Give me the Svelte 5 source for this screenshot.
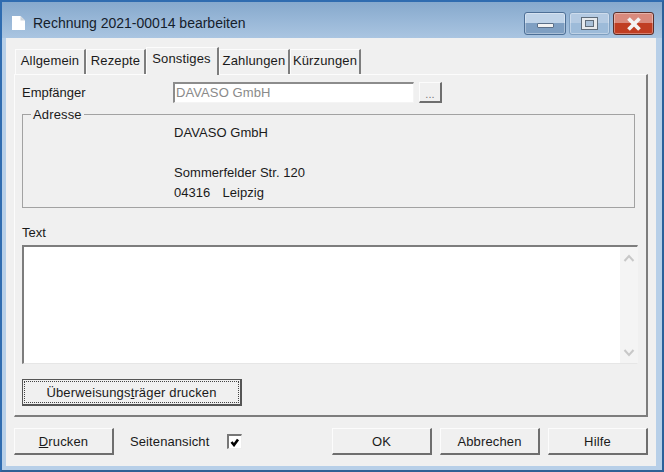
<script lang="ts">
  const tabs = [
    { label: 'Allgemein', width: 71 },
    { label: 'Rezepte', width: 60 },
    { label: 'Sonstiges', width: 73, active: true },
    { label: 'Zahlungen', width: 71 },
    { label: 'Kürzungen', width: 71 },
  ];
</script>

<div class="window">
  <header class="titlebar">
    <svg class="doc-icon" width="13" height="14" viewBox="0 0 13 14">
      <path d="M0 0h8.5l4.5 4.5v9.5h-13z" fill="#fff" />
      <path d="M8.5 0v4.5h4.5" fill="#cfd6dd" />
    </svg>
    <span class="title">Rechnung 2021-00014 bearbeiten</span>
    <div class="caption-buttons">
      <div class="cap cap-min"><span class="min-glyph"></span></div>
      <div class="cap cap-max"><span class="max-glyph"></span></div>
      <div class="cap cap-close">
        <svg width="18" height="14" viewBox="0 0 18 14">
          <path d="M3.5 1.5l11 11M14.5 1.5l-11 11" stroke="#f4f4f4" stroke-width="3.8" fill="none" />
        </svg>
      </div>
    </div>
  </header>

  <div class="client">
    <div class="tabs">
      {#each tabs as tab (tab.label)}
        <div class="tab" class:active={tab.active} style="width: {tab.width}px">{tab.label}</div>
      {/each}
    </div>

    <section class="pane">
      <div class="row-recipient">
        <span class="recipient-label">Empfänger</span>
        <div class="input">DAVASO GmbH</div>
        <div class="btn dots">...</div>
      </div>

      <div class="group">
        <span class="legend">Adresse</span>
        <div class="address">
          <div>DAVASO GmbH</div>
          <div>&nbsp;</div>
          <div>Sommerfelder Str. 120</div>
          <div class="city"><span>04316</span><span>Leipzig</span></div>
        </div>
      </div>

      <div class="text-label">Text</div>
      <div class="textarea">
        <div class="scrollbar">
          <svg width="12" height="8" viewBox="0 0 12 8"><path d="M1.5 7l4.5-5 4.5 5" stroke="#c8c8c8" stroke-width="2" fill="none" /></svg>
          <svg width="12" height="8" viewBox="0 0 12 8"><path d="M1.5 1l4.5 5 4.5-5" stroke="#c8c8c8" stroke-width="2" fill="none" /></svg>
        </div>
      </div>

      <div class="btn transfer"><span class="focus">Überweisungs<u>t</u>räger drucken</span></div>
    </section>

    <footer class="footer">
      <div class="btn action"><span><u>D</u>rucken</span></div>
      <span class="preview-label">Seitenansicht</span>
      <div class="checkbox">
        <svg width="10" height="9" viewBox="0 0 10 9"><path d="M1.5 4l2.5 3 4-5.5" stroke="#000" stroke-width="2.6" fill="none" /></svg>
      </div>
      <div class="actions">
        <div class="btn action">OK</div>
        <div class="btn action">Abbrechen</div>
        <div class="btn action">Hilfe</div>
      </div>
    </footer>
  </div>
</div>

<style>
  :global(body) {
    margin: 0;
  }

  .window {
    width: 664px;
    height: 472px;
    box-sizing: border-box;
    border: 2px solid #2f6cb0;
    border-right-color: #2b6099;
    border-bottom-color: #2f5f94;
    background: linear-gradient(to bottom, #86a9cd 0, #aac5e1 36px, #b7cfe8 36px);
    display: flex;
    flex-direction: column;
    font-family: "Liberation Sans", Arial, sans-serif;
    font-size: 13px;
    color: #1a1a1a;
    overflow: hidden;
  }

  .titlebar {
    height: 36px;
    flex: none;
    display: flex;
    align-items: flex-start;
    padding-left: 10px;
    box-sizing: border-box;
  }

  .doc-icon {
    margin-top: 14px;
    flex: none;
  }

  .title {
    margin-left: 8px;
    margin-top: 13px;
    font-size: 14px;
    line-height: 17px;
    color: #15202b;
  }

  .caption-buttons {
    margin-left: auto;
    margin-top: 10px;
    display: flex;
    gap: 3px;
    padding-right: 8px;
  }

  .cap {
    height: 23px;
    box-sizing: border-box;
    border: 1px solid #4d6f96;
    border-radius: 3px;
    display: flex;
    align-items: center;
    justify-content: center;
    box-shadow: inset 0 0 0 1px rgba(255, 255, 255, 0.35);
  }

  .cap-min {
    width: 42px;
    background: linear-gradient(to bottom, #bfd3e8 0 50%, #7f9fc2 50% 100%);
  }

  .cap-max {
    width: 41px;
    border-color: #7f9fc0;
    background: linear-gradient(to bottom, #b4cae2 0 50%, #9dbbd9 50% 100%);
  }

  .cap-close {
    width: 41px;
    border-color: #5a2f2a;
    background: linear-gradient(to bottom, #d98a7d 0 50%, #c03d22 50% 100%);
  }

  .min-glyph {
    width: 17px;
    height: 5px;
    margin-top: 3px;
    box-sizing: border-box;
    background: #f2f2f2;
    border: 1px solid #5b6f88;
    border-radius: 1px;
  }

  .max-glyph {
    width: 17px;
    height: 13px;
    box-sizing: border-box;
    background: #e6e9ec;
    border: 1px solid #5f6b78;
    padding: 2px 3px;
  }

  .max-glyph::after {
    content: "";
    display: block;
    width: 100%;
    height: 100%;
    box-sizing: border-box;
    border: 1px solid #5f6b78;
    background: #a9c0d8;
  }

  .client {
    flex: 1;
    margin: 0 6px 4px 4px;
    padding: 9px 8px 0;
    background: #f0f0f0;
    min-height: 0;
  }

  .tabs {
    display: flex;
    align-items: flex-end;
    height: 27px;
    padding-left: 1px;
    position: relative;
    z-index: 1;
  }

  .tab {
    height: 25px;
    box-sizing: border-box;
    border-top: 1px solid #fcfcfc;
    border-left: 1px solid #fcfcfc;
    border-right: 2px solid #7d7d7d;
    line-height: 22px;
    text-align: center;
    white-space: nowrap;
    letter-spacing: 0.15px;
  }

  .tab.active {
    height: 28px;
    margin-bottom: -1px;
    line-height: 22px;
    background: #f0f0f0;
    text-indent: -1px;
  }

  .pane {
    height: 343px;
    box-sizing: border-box;
    border-top: 1px solid #fcfcfc;
    border-left: 1px solid #fcfcfc;
    border-right: 2px solid #7d7d7d;
    border-bottom: 2px solid #7d7d7d;
    padding: 6px 0 0 7px;
  }

  .row-recipient {
    display: flex;
    align-items: center;
    height: 22px;
  }

  .recipient-label {
    width: 151px;
    padding-top: 1px;
  }

  .input {
    width: 241px;
    height: 21px;
    box-sizing: border-box;
    background: #fff;
    border: 1px solid #f4f4f4;
    border-top: 2px solid #8c8c8c;
    border-left: 2px solid #8c8c8c;
    padding-left: 1px;
    line-height: 18px;
    color: #8a8a8a;
    letter-spacing: 0.1px;
  }

  .btn {
    box-sizing: border-box;
    display: flex;
    align-items: center;
    justify-content: center;
    background: #f0f0f0;
    border-top: 1px solid #fcfcfc;
    border-left: 1px solid #fcfcfc;
    border-right: 2px solid #6e6e6e;
    border-bottom: 2px solid #6e6e6e;
    letter-spacing: 0.15px;
  }

  .dots {
    width: 23px;
    height: 21px;
    margin-left: 5px;
    color: #777;
    font-size: 11px;
    padding-top: 4px;
  }

  .group {
    position: relative;
    width: 613px;
    height: 94px;
    box-sizing: border-box;
    margin-top: 11px;
    border: 1px solid #a2a2a2;
    padding: 8px 0 0 151px;
  }

  .legend {
    position: absolute;
    top: -8px;
    left: 8px;
    padding: 0 2px;
    background: #f0f0f0;
    line-height: 15px;
    letter-spacing: 0.15px;
  }

  .address {
    line-height: 20px;
    letter-spacing: 0.05px;
  }

  .city {
    display: flex;
    gap: 12px;
  }

  .text-label {
    margin-top: 17px;
    line-height: 16px;
  }

  .textarea {
    width: 616px;
    height: 119px;
    margin-top: 4px;
    box-sizing: border-box;
    background: #fff;
    border-top: 2px solid #7d7d7d;
    border-left: 2px solid #7d7d7d;
    border-right: 1px solid #f4f4f4;
    border-bottom: 1px solid #e6e6e6;
    display: flex;
    justify-content: flex-end;
  }

  .scrollbar {
    width: 17px;
    background: #f4f4f4;
    display: flex;
    flex-direction: column;
    justify-content: space-between;
    align-items: center;
    padding: 7px 0 6px;
    box-sizing: border-box;
  }

  .transfer {
    width: 220px;
    height: 27px;
    margin-top: 15px;
    border: 1px solid #555;
    border-right-width: 2px;
    border-bottom-width: 2px;
  }

  .focus {
    display: flex;
    align-items: center;
    justify-content: center;
    white-space: pre;
    width: 100%;
    height: 100%;
    box-sizing: border-box;
    outline: 1px dotted #444;
    outline-offset: -2px;
  }

  .footer {
    display: flex;
    align-items: center;
    margin-top: 11px;
    height: 27px;
  }

  .action {
    width: 100px;
    height: 27px;
  }

  .preview-label {
    margin-left: 16px;
    width: 97px;
    letter-spacing: 0.1px;
  }

  .checkbox {
    width: 15px;
    height: 15px;
    box-sizing: border-box;
    background: #fff;
    border-top: 2px solid #777;
    border-left: 2px solid #777;
    border-right: 1px solid #eee;
    border-bottom: 1px solid #eee;
    display: flex;
    align-items: center;
    justify-content: center;
  }

  .actions {
    margin-left: auto;
    display: flex;
    gap: 8px;
  }
</style>
